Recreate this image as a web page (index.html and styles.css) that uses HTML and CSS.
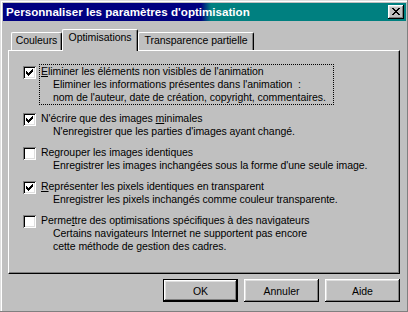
FILE: index.html
```html
<!DOCTYPE html>
<html lang="fr">
<head>
    <meta charset="UTF-8">
    <title>Personnaliser les paramètres d'optimisation</title>
    <link rel="stylesheet" href="styles.css">
</head>
<body>

<div class="window">
    <div class="titlebar">
        <span class="title">Personnaliser les paramètres d'optimisation</span>
        <button class="close">
            <svg width="8" height="7" viewBox="0 0 8 7" shape-rendering="crispEdges">
                <path d="M0 0h2v1h-2z M6 0h2v1h-2z M1 1h2v1h-2z M5 1h2v1h-2z M2 2h4v1h-4z M3 3h2v1h-2z M2 4h4v1h-4z M1 5h2v1h-2z M5 5h2v1h-2z M0 6h2v1h-2z M6 6h2v1h-2z" fill="#000"/>
            </svg>
        </button>
    </div>

    <div class="body">
        <div class="tabs">
            <div class="tab tab-colors">Couleurs</div>
            <div class="tab tab-active">Optimisations</div>
            <div class="tab tab-transp">Transparence partielle</div>
        </div>

        <div class="panel">
            <div class="option">
                <span class="check">
                    <svg width="7" height="7" viewBox="0 0 7 7" shape-rendering="crispEdges"><path d="M0 2h1v1h1v1h1v-1h1v-1h1v-1h1v-1h1v3h-1v1h-1v1h-1v1h-1v1h-1v-1h-1v-1h-1z" fill="#000"/></svg>
                </span>
                <div class="opt-text focus">
                    <div><span class="key">E</span>liminer les éléments non visibles de l'animation</div>
                    <div class="desc">Eliminer les informations présentes dans l'animation&nbsp; :<br>nom de l'auteur, date de création, copyright, commentaires.</div>
                </div>
            </div>

            <div class="option">
                <span class="check">
                    <svg width="7" height="7" viewBox="0 0 7 7" shape-rendering="crispEdges"><path d="M0 2h1v1h1v1h1v-1h1v-1h1v-1h1v-1h1v3h-1v1h-1v1h-1v1h-1v1h-1v-1h-1v-1h-1z" fill="#000"/></svg>
                </span>
                <div class="opt-text">
                    <div>N'écrire que des images <span class="key">m</span>inimales</div>
                    <div class="desc">N'enregistrer que les parties d'images ayant changé.</div>
                </div>
            </div>

            <div class="option">
                <span class="check"></span>
                <div class="opt-text">
                    <div>Regrouper les images identiques</div>
                    <div class="desc">Enregistrer les images inchangées sous la forme d'une seule image.</div>
                </div>
            </div>

            <div class="option">
                <span class="check">
                    <svg width="7" height="7" viewBox="0 0 7 7" shape-rendering="crispEdges"><path d="M0 2h1v1h1v1h1v-1h1v-1h1v-1h1v-1h1v3h-1v1h-1v1h-1v1h-1v1h-1v-1h-1v-1h-1z" fill="#000"/></svg>
                </span>
                <div class="opt-text">
                    <div><span class="key">R</span>eprésenter les pixels identiques en transparent</div>
                    <div class="desc">Enregistrer les pixels inchangés comme couleur transparente.</div>
                </div>
            </div>

            <div class="option">
                <span class="check"></span>
                <div class="opt-text">
                    <div>Perme<span class="key">t</span>tre des optimisations spécifiques à des navigateurs</div>
                    <div class="desc">Certains navigateurs Internet ne supportent pas encore<br>cette méthode de gestion des cadres.</div>
                </div>
            </div>
        </div>

        <div class="buttons">
            <button class="btn btn-default">OK</button>
            <button class="btn">Annuler</button>
            <button class="btn">Aide</button>
        </div>
    </div>
</div>

</body>
</html>
```

FILE: styles.css
```css
html, body {
    margin: 0;
    padding: 0;
}
body {
    background: #c0c0c0;
    font-family: "Liberation Sans", Arial, sans-serif;
    font-size: 10.5px;
    letter-spacing: -0.05px;
    color: #000;
}
.window {
    width: 408px;
    height: 312px;
    box-sizing: border-box;
    padding: 3px 2px 0 3px;
    background: #c0c0c0;
    box-shadow: inset -1px -1px #808080, inset 1px 1px #dfdfdf, inset 2px 2px #fff;
}
.titlebar {
    height: 18px;
    display: flex;
    align-items: center;
    justify-content: space-between;
    padding: 0 2px 0 3px;
    background: linear-gradient(to right, #000080 198px, #008080 208px);
}
.title {
    color: #fff;
    font-weight: bold;
    font-size: 11.6px;
    letter-spacing: 0;
    line-height: 14px;
}
.close {
    width: 16px;
    height: 14px;
    padding: 0;
    border: none;
    background: #c0c0c0;
    display: flex;
    align-items: flex-start;
    justify-content: flex-start;
    box-shadow: inset -1px -1px #000, inset 1px 1px #fff, inset -2px -2px #808080, inset 2px 2px #dfdfdf;
}
.close svg {
    display: block;
    margin: 3px 0 0 4px;
}
.body {
    padding: 8px 6px 0 5px;
}
.tabs {
    display: flex;
    align-items: flex-end;
    height: 21px;
    padding-left: 3px;
}
.tab {
    box-sizing: border-box;
    height: 18px;
    border: 1px solid;
    border-color: #fff #000 transparent #fff;
    border-bottom: none;
    border-radius: 2px 2px 0 0;
    box-shadow: inset -1px 0 #808080;
    background: #c0c0c0;
    text-align: center;
    line-height: 15px;
}
.tab-colors {
    width: 51px;
}
.tab-active {
    width: 76px;
    height: 22px;
    margin-bottom: -1px;
    position: relative;
    z-index: 1;
}
.tab-transp {
    width: 116px;
}
.panel {
    box-sizing: border-box;
    height: 224px;
    padding: 13px 0 0 14px;
    border: 1px solid;
    border-color: #fff #000 #000 #fff;
    box-shadow: inset -1px -1px #808080;
}
.option {
    display: flex;
    align-items: flex-start;
    margin-bottom: 6px;
}
.check {
    box-sizing: border-box;
    width: 13px;
    height: 13px;
    margin-top: 2px;
    flex: none;
    background: #fff;
    box-shadow: inset 1px 1px #808080, inset -1px -1px #fff, inset 2px 2px #000, inset -2px -2px #dfdfdf;
}
.check svg {
    display: block;
    margin: 3px 0 0 3px;
}
.opt-text {
    margin-left: 3px;
    padding: 0 7px 0 1px;
    border: 1px dotted transparent;
    line-height: 13px;
}
.opt-text.focus {
    border-color: #000;
}
.desc {
    padding-left: 12px;
}
.key {
    text-decoration: underline;
}
.buttons {
    display: flex;
    justify-content: flex-end;
    gap: 6px;
    margin-top: 5px;
}
.btn {
    width: 75px;
    height: 23px;
    padding: 0;
    border: none;
    background: #c0c0c0;
    font-family: "Liberation Sans", Arial, sans-serif;
    font-size: 10.5px;
    letter-spacing: -0.05px;
    color: #000;
    box-shadow: inset -1px -1px #000, inset 1px 1px #fff, inset -2px -2px #808080, inset 2px 2px #dfdfdf;
}
.btn-default {
    box-shadow: inset 0 0 0 1px #000, inset -2px -2px #000, inset 2px 2px #fff, inset -3px -3px #808080, inset 3px 3px #dfdfdf;
}
```
